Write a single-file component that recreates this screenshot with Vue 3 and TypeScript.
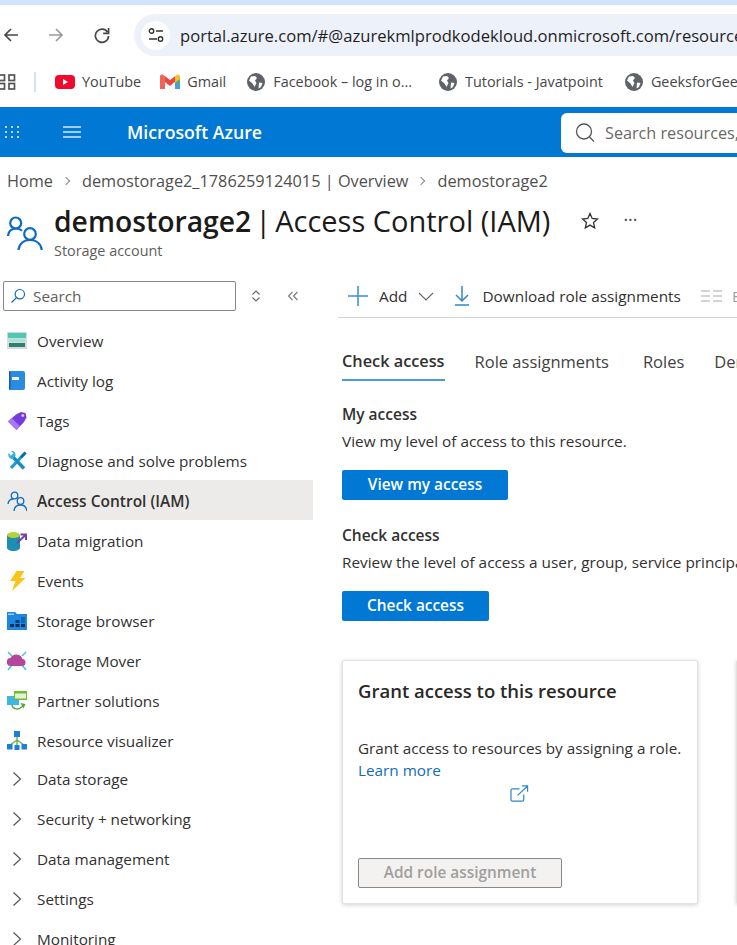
<script setup lang="ts">
const bookmarks = ['Facebook – log in o...', 'Tutorials - Javatpoint', 'GeeksforGeeks']
const groups = ['Data storage', 'Security + networking', 'Data management', 'Settings', 'Monitoring']
const tabs = ['Check access', 'Role assignments', 'Roles', 'Deny assignments']
</script>

<template>
  <div class="page">
    <div class="tabstrip"></div>
    <div class="toolbar">
      <svg class="nav back" width="18" height="18" viewBox="0 0 18 18"><path d="M16 9H3M9 3 3 9l6 6" fill="none" stroke="#474747" stroke-width="1.7"/></svg>
      <svg class="nav fwd" width="18" height="18" viewBox="0 0 18 18"><path d="M2 9h13M9 3l6 6-6 6" fill="none" stroke="#9a9a9a" stroke-width="1.7"/></svg>
      <svg class="nav reload" width="18" height="18" viewBox="0 0 18 18"><path d="M14.600 6.200A6.600 6.600 0 1 0 15.600 10" fill="none" stroke="#474747" stroke-width="1.700"/><path d="M15.600 2v5.400h-5.400" fill="none" stroke="#474747" stroke-width="1.700"/></svg>
      <div class="omni">
        <span class="tune">
          <svg width="16" height="14" viewBox="0 0 16 14"><circle cx="3.500" cy="3" r="2.200" fill="none" stroke="#333" stroke-width="1.400"/><path d="M8 3h7M1 11h8" stroke="#333" stroke-width="1.500"/><circle cx="12.500" cy="11" r="2.200" fill="none" stroke="#333" stroke-width="1.400"/></svg>
        </span>
        <span class="url">portal.azure.com/#@azurekmlprodkodekloud.onmicrosoft.com/resource/subscriptions</span>
      </div>
    </div>
    <div class="bookmarks">
      <svg class="apps" width="16" height="18" viewBox="0 0 16 18"><g fill="none" stroke="#555" stroke-width="1.700"><rect x="-1" y="2" width="5.500" height="5.500"/><rect x="-1" y="10.500" width="5.500" height="5.500"/><rect x="9" y="2" width="5.500" height="5.500"/><rect x="9" y="10.500" width="5.500" height="5.500"/></g></svg>
      <span class="sep"></span>
      <span class="bm yt">
        <svg width="20" height="14" viewBox="0 0 20 14"><rect width="20" height="14" rx="4" fill="#f00a2c"/><path d="m8 4 5 3-5 3z" fill="#fff"/></svg>YouTube
      </span>
      <span class="bm gm">
        <svg width="20" height="16" viewBox="0 0 20 16"><path d="M0 15V2.500C0 .8 2 0 3.300 1L5 2.300V15z" fill="#f2645a"/><path d="M20 15V6l-5 1v8z" fill="#4a9fd4"/><path d="M15 7.500 20 4v3l-5 4z" fill="#4fb06a"/><path d="M5 2.300 10 6l5-3.700v5.500L10 12 5 8z" fill="#e8483f"/><path d="M15 2.300 16.700 1C18 0 20 .8 20 2.500V5l-5 3.500z" fill="#f5c02c"/></svg>Gmail
      </span>
      <span v-for="b in bookmarks" :key="b" class="bm glob">
        <svg width="18" height="18" viewBox="0 0 18 18"><circle cx="9" cy="9" r="9" fill="#5f6368"/><path d="M4 3.500 8 3l2 2-2 2.500 1.500 2.500-2 4-2-3.500L2 7.500zM12 9.500l3.500.5-1.500 4-2.500 1.500z" fill="#fff"/></svg>{{ b }}
      </span>
    </div>
    <header class="azure">
      <svg class="waffle" width="16" height="14" viewBox="0 0 16 14"><g fill="#e6f2fb"><circle cx="2" cy="2" r="1.100"/><circle cx="8" cy="2" r="1.100"/><circle cx="14" cy="2" r="1.100"/><circle cx="2" cy="7" r="1.100"/><circle cx="8" cy="7" r="1.100"/><circle cx="14" cy="7" r="1.100"/><circle cx="2" cy="12" r="1.100"/><circle cx="8" cy="12" r="1.100"/><circle cx="14" cy="12" r="1.100"/></g></svg>
      <svg class="burger" width="18" height="12" viewBox="0 0 18 12"><path d="M0 1h18M0 6h18M0 11h18" stroke="#d6e8f7" stroke-width="1.300"/></svg>
      <span class="brand">Microsoft Azure</span>
      <div class="search">
        <svg width="22" height="22" viewBox="0 0 22 22"><circle cx="10" cy="9.500" r="7.500" fill="none" stroke="#555" stroke-width="1.300"/><path d="m15.500 15 4.500 4.500" stroke="#555" stroke-width="1.300"/></svg>
        <span>Search resources, services, and docs</span>
      </div>
    </header>

    <nav class="crumbs">
      <span>Home</span><i class="chev"></i><span>demostorage2_1786259124015 | Overview</span><i class="chev"></i><span>demostorage2</span>
    </nav>
    <div class="title">
      <svg class="title-icon" width="36" height="36" viewBox="0 0 36 36"><g fill="none" stroke="#0f6cbd" stroke-width="2.200"><circle cx="8.700" cy="8" r="5.500"/><path d="M1 21c.5-4.500 3.500-7.500 8-7.500 2.500 0 4.500.8 6 2.300"/><circle cx="23" cy="19" r="5.800"/><path d="M11.500 35c.5-6 5-10 11.500-10s11 4 11.800 10"/></g></svg>
      <div class="title-text">
        <div class="title-line">
          <h1><b>demostorage2</b><span class="pipe">|</span><span class="page-name">Access Control (IAM)</span></h1>
          <svg class="star" width="18" height="18" viewBox="0 0 18 18"><path d="m9 1.500 2.200 5 5.300.5-4 3.600 1.200 5.300L9 13.100l-4.700 2.800 1.200-5.300-4-3.600 5.300-.5z" fill="none" stroke="#333" stroke-width="1.300"/></svg>
          <span class="more">···</span>
        </div>
        <div class="sub">Storage account</div>
      </div>
    </div>

    <div class="body">
      <aside class="side">
        <div class="side-search-row">
          <div class="side-search">
            <svg width="16" height="16" viewBox="0 0 16 16"><circle cx="9.800" cy="6.200" r="4.700" fill="none" stroke="#0f6cbd" stroke-width="1.200"/><path d="M6.400 9.600 1.500 14.500" stroke="#0f6cbd" stroke-width="1.300"/></svg>
            <span>Search</span>
          </div>
          <svg class="updown" width="10" height="12" viewBox="0 0 10 12"><path d="m1.500 4.500 3.500-3.500 3.500 3.500M1.500 7.500 5 11l3.500-3.500" fill="none" stroke="#666" stroke-width="1.100"/></svg>
          <svg class="collapse" width="12" height="10" viewBox="0 0 12 10"><path d="M5.500 1 1.500 5l4 4M10.500 1l-4 4 4 4" fill="none" stroke="#777" stroke-width="1.100"/></svg>
        </div>

        <a class="item">
          <svg viewBox="0 0 20 20"><rect y="1" width="20" height="17" fill="#d5dbdb"/><rect x="1" y="2" width="18" height="5" fill="#4cc9b0"/><rect x="2" y="8" width="16" height="3" fill="#a6e3d8"/><rect x="2" y="12" width="16" height="4" fill="#2f7e72"/></svg>
          <span>Overview</span>
        </a>
        <a class="item">
          <svg viewBox="0 0 20 20"><rect x="2" width="16" height="19" rx="2" fill="#2b8be0"/><rect x="2" width="1.500" height="19" rx=".7" fill="#0f5fa8"/><rect x="5" y="6" width="7" height="3" fill="#eef6fd"/></svg>
          <span>Activity log</span>
        </a>
        <a class="item">
          <svg viewBox="0 0 20 20"><path d="M9 3.500 14 1l4.500 1 1 4.500L17 11l-7.500 8L1 10.500z" fill="#773adc"/><path d="M1 10.500 9.500 19l3.500-3.700-8.500-8.500z" fill="#a67af4"/><circle cx="15.800" cy="4.600" r="1.400" fill="#e6dcfa"/></svg>
          <span>Tags</span>
        </a>
        <a class="item">
          <svg viewBox="0 0 20 20"><path d="M18.500 1.500 4 17" stroke="#1f9ad8" stroke-width="3.200" fill="none"/><path d="M18.500 1.500 14 6.400" stroke="#1268a0" stroke-width="2.400" fill="none"/><path d="M4.500 4.500 17 17.500" stroke="#1a8cc4" stroke-width="3.400" fill="none"/><path d="M1.500 2 4 5l2.500-2.500L4 0C6.500-.5 9 1.500 8.500 4.500L6 8C3 8.500.5 5 1.500 2z" fill="#2fb0e6"/></svg>
          <span>Diagnose and solve problems</span>
        </a>
        <a class="item active">
          <svg viewBox="0 0 20 20"><g fill="none" stroke="#0f6cbd" stroke-width="1.300"><circle cx="7.500" cy="4.500" r="3.300"/><path d="M1 13c.3-3.200 2-5 5.500-5"/><circle cx="13.500" cy="10" r="3.300"/><path d="M7 20c.3-3.500 2.500-6 6.500-6s6 2.500 6.300 6"/></g></svg>
          <span>Access Control (IAM)</span>
        </a>
        <a class="item">
          <svg viewBox="0 0 20 20"><path d="M0 4v13c0 1.500 3 3 6.500 3s6.500-1.500 6.500-3V4z" fill="#1e8fb0"/><ellipse cx="6.500" cy="4" rx="6.500" ry="3" fill="#b5d334"/><path d="m10 12 8.500-8m-5-.5H19V9" fill="none" stroke="#7a3fa8" stroke-width="2"/></svg>
          <span>Data migration</span>
        </a>
        <a class="item">
          <svg viewBox="0 0 20 20"><path d="M9.500 0h8l-4.500 7h5.500L5 20l3.500-10H3z" fill="#fcc419"/></svg>
          <span>Events</span>
        </a>
        <a class="item">
          <svg viewBox="0 0 20 20"><path d="M0 1h8l2 2h10v16H0z" fill="#1e88e0"/><rect x="1" y="2.500" width="6" height="1.500" fill="#9dd0f5"/><rect x="3" y="13" width="4" height="3" fill="#0d2d5c"/><rect x="8.500" y="13" width="4" height="3" fill="#0d2d5c"/><rect x="14" y="13" width="4" height="3" fill="#0d2d5c"/><rect x="8.500" y="9" width="4" height="3" fill="#0d3f80"/><rect x="14" y="6" width="4" height="6" fill="#1465b5"/></svg>
          <span>Storage browser</span>
        </a>
        <a class="item">
          <svg viewBox="0 0 20 20"><path d="m1 1 4 4M19 1l-4 4M1 19l4-5M19 19l-4-5" stroke="#46c3d6" stroke-width="1.500"/><path d="M4 15a4 4 0 0 1-.5-8 6.500 6.500 0 0 1 12 1A3.600 3.600 0 0 1 16 15z" fill="#b3459b"/></svg>
          <span>Storage Mover</span>
        </a>
        <a class="item">
          <svg viewBox="0 0 20 20"><rect x="0" y="5" width="12" height="9" fill="#3fb5e3"/><rect x="7" y="0" width="13" height="9" fill="#6fbf2b"/><rect x="8" y="2.500" width="11" height="5" fill="#e4f3d6"/><path d="M5 14c.5 4 6 6 11 1" fill="none" stroke="#5aa73c" stroke-width="1.500"/><path d="m13.500 12 5 1-2 4.500z" fill="#5aa73c"/></svg>
          <span>Partner solutions</span>
        </a>
        <a class="item">
          <svg viewBox="0 0 20 20"><path d="M10 5v9M10 9 3 14M10 9l7 5" stroke="#6bb04a" stroke-width="1.400" fill="none"/><rect x="7" y="0" width="6" height="6" fill="#1e7fd6"/><rect x="0" y="13" width="5.500" height="5.500" fill="#1e7fd6"/><rect x="7.500" y="14" width="5" height="5" fill="#1e7fd6"/><rect x="14.500" y="13" width="5.500" height="5.500" fill="#1e7fd6"/></svg>
          <span>Resource visualizer</span>
        </a>
        <div class="groups">
          <a v-for="g in groups" :key="g" class="item group">
            <svg class="caret" viewBox="0 0 10 16"><path d="m1.500 1.500 7 6.500-7 6.500" fill="none" stroke="#555" stroke-width="1.200"/></svg>
            <span>{{ g }}</span>
          </a>
        </div>
      </aside>

      <main class="main">
        <div class="cmd">
          <span class="cmd-btn add">
            <svg width="20" height="20" viewBox="0 0 20 20"><path d="M10 0v20M0 10h20" stroke="#3a8fd0" stroke-width="1.500"/></svg>
            Add
            <svg width="16" height="9" viewBox="0 0 16 9"><path d="m1 1 7 7 7-7" fill="none" stroke="#666" stroke-width="1.100"/></svg>
          </span>
          <span class="cmd-btn dl">
            <svg width="16" height="20" viewBox="0 0 16 20"><path d="M8 0v15M2 9l6 6 6-6" fill="none" stroke="#2f86cc" stroke-width="1.500"/><path d="M1 19h14" stroke="#2f86cc" stroke-width="1.500"/></svg>
            Download role assignments
          </span>
          <span class="cmd-btn off">
            <svg width="21" height="12" viewBox="0 0 21 12"><path d="M0 1h9M12 1h9M0 6h9M12 6h9M0 11h9M12 11h9" stroke="#aaa" stroke-width="1.200"/></svg>
            Edit columns
          </span>
        </div>
        <div class="content">
          <div class="tabs">
            <span v-for="(t, i) in tabs" :key="t" class="tab" :class="{ on: i === 0 }">{{ t }}</span>
          </div>
          <section class="block first">
            <h3>My access</h3>
            <p>View my level of access to this resource.</p>
            <button class="primary w1">View my access</button>
          </section>
          <section class="block second">
            <h3>Check access</h3>
            <p>Review the level of access a user, group, service principal, or managed identity has to this resource.</p>
            <button class="primary w2">Check access</button>
          </section>
          <div class="cards">
            <div class="card">
              <h2>Grant access to this resource</h2>
              <p>Grant access to resources by assigning a role.<br><a>Learn more</a></p>
              <svg class="ext" width="19" height="18" viewBox="0 0 20 19"><path d="M10 4H2.500A1.500 1.500 0 0 0 1 5.500v10A1.500 1.500 0 0 0 2.500 17H13a1.500 1.500 0 0 0 1.500-1.500V10M8 11 18.500 1M12.500 1h6v6" fill="none" stroke="#2f86cc" stroke-width="1.300"/></svg>
              <button class="disabled">Add role assignment</button>
            </div>
            <div class="card next"></div>
          </div>
        </div>
      </main>
    </div>
  </div>
</template>

<style>
html, body { margin: 0; background: #fff; }
</style>

<style scoped>
.page {
  width: 737px; height: 945px; overflow: hidden; display: flex; flex-direction: column;
  font-family: "Open Sans", "Noto Sans", sans-serif; color: #323130; font-size: 15.300px; background: #fff;
}
.tabstrip { height: 5px; background: #d3e3fd; flex: none; }
.toolbar { height: 51px; flex: none; display: flex; align-items: flex-end; position: relative; overflow: hidden; }
.nav { flex: none; margin-bottom: 12px; }
.back { margin-left: 2px; }
.fwd { margin-left: 27px; }
.reload { margin-left: 28px; }
.omni {
  margin-left: 23px; width: 640px; height: 42px; flex: none; border-radius: 21px 0 0 21px; background: #edf1fa;
  display: flex; align-items: center; padding-left: 7px; box-sizing: border-box; overflow: hidden;
}
.tune { width: 29px; height: 29px; border-radius: 50%; background: #fff; flex: none; display: flex; align-items: center; justify-content: center; }
.url { margin-left: 10px; font-size: 16.600px; color: #1f1f1f; white-space: nowrap; }
.bookmarks { height: 51px; flex: none; display: flex; align-items: center; font-size: 14.400px; color: #474747; white-space: nowrap; overflow: hidden; }
.apps { flex: none; }
.sep { width: 2px; height: 20px; background: #d3e3fd; margin-left: 18px; flex: none; }
.bm { display: inline-flex; align-items: center; gap: 7px; flex: none; }
.yt { margin-left: 19px; }
.gm { margin-left: 19px; }
.glob { margin-left: 22px; gap: 8px; }
.gm + .glob { margin-left: 21px; margin-right: 5px; }
.azure { height: 50px; flex: none; background: #0078d4; display: flex; align-items: center; position: relative; }
.waffle { margin-left: 4px; flex: none; }
.burger { margin-left: 43px; flex: none; }
.brand { margin-left: 46px; color: #fff; font-weight: 600; font-size: 17.700px; white-space: nowrap; width: 199px; flex: none; }
.search {
  flex: none; margin-left: 235px; width: 180px; height: 40px; background: #fff; border-radius: 6px 0 0 6px; display: flex; align-items: center;
  gap: 9px; padding-left: 13px; box-sizing: border-box; color: #696969; font-size: 16.200px; white-space: nowrap; overflow: hidden; margin-top: 1px;
}
.search svg { flex: none; }
.crumbs { height: 47px; flex: none; display: flex; align-items: center; padding-left: 7px; font-size: 16.300px; color: #514f4d; white-space: nowrap; }
.chev { display: block; width: 5px; height: 5px; border-top: 1px solid #888; border-right: 1px solid #888; transform: rotate(45deg); margin: 0 13px 0 10px; }
.title { height: 77px; flex: none; display: flex; position: relative; }
.title-icon { margin: 11px 0 0 7px; flex: none; }
.title-text { margin-left: 11px; }
.title-line { display: flex; align-items: center; height: 34px; white-space: nowrap; }
h1 { margin: 0; font-size: 29px; line-height: 32px; font-weight: 400; color: #1b1a19; display: flex; align-items: baseline; }
h1 b { font-weight: 600; font-size: 28.300px; }
.pipe { margin-left: 4px; }
.page-name { margin-left: 4px; }
.star { margin-left: 31px; flex: none; }
.more { margin-left: 24px; font-size: 18px; color: #444; margin-top: -4px; }
.sub { font-size: 14.400px; color: #605e5c; margin-top: 3px; line-height: 20px; }
.body { flex: 1; min-height: 0; display: flex; }
.side { width: 313px; flex: none; }
.side-search-row { height: 40px; display: flex; align-items: flex-start; }
.side-search {
  margin-left: 3px; width: 233px; height: 30px; box-sizing: border-box; border: 1px solid #8a8886; border-radius: 2px; display: flex; align-items: center;
  padding-left: 6px; gap: 7px; font-size: 15.300px; color: #605e5c; flex: none;
}
.updown { margin: 9px 0 0 15px; flex: none; }
.collapse { margin: 10px 0 0 26px; flex: none; }
.item { height: 40px; display: flex; align-items: center; padding-left: 7px; gap: 10px; font-size: 15.300px; white-space: nowrap; box-sizing: border-box; }
.item > svg { width: 20px; height: 20px; flex: none; }
.item.active { background: #edebe9; font-weight: 600; font-size: 15.500px; margin-top: -1px; margin-bottom: 1px; padding-top: 2px; }
.groups { margin-top: -2px; }
.group { padding-left: 12px; gap: 15px; }
.item > svg.caret { width: 10px; height: 16px; }
.main { flex: 1; min-width: 0; margin-left: 25px; }
.cmd { height: 36px; border-bottom: 1px solid #d4d4d4; display: flex; align-items: flex-start; white-space: nowrap; overflow: hidden; font-size: 15.350px; }
.cmd-btn { display: inline-flex; align-items: center; flex: none; height: 30px; }
.add { margin-left: 10px; gap: 11px; }
.dl { margin-left: 20px; gap: 12px; }
.off { margin-left: 20px; gap: 10px; color: #a19f9d; }
.content { padding-left: 4px; }
.tabs { display: flex; gap: 30px; margin-top: 32px; height: 31px; white-space: nowrap; font-size: 16.500px; color: #424242; }
.tab:nth-child(3) { margin-left: 4px; }
.tab.on { font-weight: 600; font-size: 16.300px; color: #323130; border-bottom: 2px solid #4a9ad8; height: 31px; box-sizing: border-box; }
.block h3 { margin: 0; font-size: 15.500px; font-weight: 600; line-height: 20px; color: #323130; }
.block p { margin: 7px 0 0; line-height: 20px; font-size: 15.350px; color: #323130; white-space: nowrap; }
.first { margin-top: 23px; }
.second { margin-top: 25px; }
.primary { display: block; height: 30px; margin-top: 19px; border: 0; border-radius: 2px; background: #0078d4; color: #fff; font: 600 15.400px "Open Sans", sans-serif; padding: 0 0 2px; }
.w1 { width: 166px; }
.w2 { width: 147px; }
.cards { display: flex; gap: 38px; margin-top: 39px; }
.card { width: 356px; height: 244px; flex: none; box-sizing: border-box; border: 1px solid #e4e2e0; border-radius: 2px; box-shadow: 0 1px 4px rgba(0,0,0,.18); padding: 15px 15px; position: relative; background: #fff; }
.card h2 { margin: 0; font-size: 18.500px; font-weight: 600; line-height: 30px; color: #292827; white-space: nowrap; }
.card p { margin: 31px 0 0; font-size: 15.300px; line-height: 22px; white-space: nowrap; }
.card a { color: #0f6cbd; }
.ext { display: block; margin: 4px 0 0 152px; }
.disabled { position: absolute; left: 15px; bottom: 15px; width: 204px; height: 30px; border: 1px solid #8a8886; border-radius: 2px; background: #f3f2f1; color: #a19f9d; font: 600 15.400px "Open Sans", sans-serif; padding: 0 0 2px; }
</style>
